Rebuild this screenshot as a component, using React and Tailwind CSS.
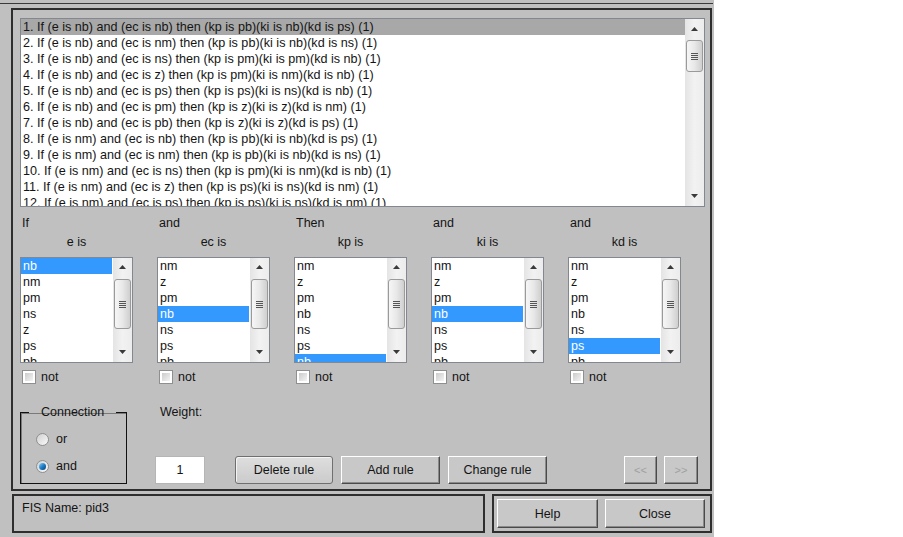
import React from "react";

const rules = [
  "1. If (e is nb) and (ec is nb) then (kp is pb)(ki is nb)(kd is ps) (1)",
  "2. If (e is nb) and (ec is nm) then (kp is pb)(ki is nb)(kd is ns) (1)",
  "3. If (e is nb) and (ec is ns) then (kp is pm)(ki is pm)(kd is nb) (1)",
  "4. If (e is nb) and (ec is z) then (kp is pm)(ki is nm)(kd is nb) (1)",
  "5. If (e is nb) and (ec is ps) then (kp is ps)(ki is ns)(kd is nb) (1)",
  "6. If (e is nb) and (ec is pm) then (kp is z)(ki is z)(kd is nm) (1)",
  "7. If (e is nb) and (ec is pb) then (kp is z)(ki is z)(kd is ps) (1)",
  "8. If (e is nm) and (ec is nb) then (kp is pb)(ki is nb)(kd is ps) (1)",
  "9. If (e is nm) and (ec is nm) then (kp is pb)(ki is nb)(kd is ns) (1)",
  "10. If (e is nm) and (ec is ns) then (kp is pm)(ki is nm)(kd is nb) (1)",
  "11. If (e is nm) and (ec is z) then (kp is ps)(ki is ns)(kd is nm) (1)",
  "12. If (e is nm) and (ec is ps) then (kp is ps)(ki is ns)(kd is nm) (1)",
];

const columns = [
  { head: "If", label: "e is", items: ["nb", "nm", "pm", "ns", "z", "ps", "pb"], sel: 0 },
  { head: "and", label: "ec is", items: ["nm", "z", "pm", "nb", "ns", "ps", "pb"], sel: 3 },
  { head: "Then", label: "kp is", items: ["nm", "z", "pm", "nb", "ns", "ps", "nb"], sel: 6 },
  { head: "and", label: "ki is", items: ["nm", "z", "pm", "nb", "ns", "ps", "pb"], sel: 3 },
  { head: "and", label: "kd is", items: ["nm", "z", "pm", "nb", "ns", "ps", "pb"], sel: 5 },
];

const Arrow = ({ down }) => (
  <svg width="7" height="4" viewBox="0 0 7 4">
    <polygon points={down ? "0,0 7,0 3.5,4" : "0,4 7,4 3.5,0"} fill="#3a3a3a" />
  </svg>
);

const ScrollBar = ({ up, thumb, down }) => (
  <div className="flex flex-col w-[19px] shrink-0 bg-gradient-to-r from-[#e4e4e4] via-[#f2f2f2] to-[#ececec]">
    <div className={"flex items-center justify-center " + up}>
      <Arrow />
    </div>
    <div
      className={
        "mx-[1px] rounded-[3px] border border-[#9a9a9a] bg-gradient-to-r from-[#f6f6f6] via-[#e8e8e8] to-[#cfcfcf] flex flex-col items-center justify-center gap-[1px] " +
        thumb
      }
    >
      <div className="w-[7px] h-px bg-[#555]" />
      <div className="w-[7px] h-px bg-[#555]" />
      <div className="w-[7px] h-px bg-[#555]" />
      <div className="w-[7px] h-px bg-[#555]" />
    </div>
    <div className={"mt-auto flex items-center justify-center " + down}>
      <Arrow down />
    </div>
  </div>
);

const CheckBox = () => (
  <div className="w-[14px] h-[14px] border border-[#8e8f8f] bg-white p-[2px]">
    <div className="w-full h-full bg-gradient-to-br from-[#cbcbcb] to-[#f4f4f4]" />
  </div>
);

const Radio = ({ on }) => (
  <div className="w-[13px] h-[13px] rounded-full border border-[#8e8f8f] bg-gradient-to-br from-[#d0d0d0] to-[#fafafa] flex items-center justify-center">
    {on && (
      <div className="w-[7px] h-[7px] rounded-full bg-gradient-to-br from-[#7fd0ff] via-[#1e7fc8] to-[#0b3e6e]" />
    )}
  </div>
);

const RaisedButton = ({ w, children, disabled }) => (
  <div
    className={
      "h-[28px] flex items-center justify-center border border-t-white border-l-white border-r-[#4a4a4a] border-b-[#4a4a4a] shadow-[inset_-1px_-1px_0_#8a8a8a] bg-[#c8c8c8] " +
      w +
      (disabled ? " text-[#a0a0a0] text-[11px]" : "")
    }
  >
    {children}
  </div>
);

export default function App() {
  return (
    <div
      className="w-[903px] h-[537px] bg-white text-[12.5px] leading-[14px] text-[#141414] overflow-hidden"
      style={{ fontFamily: '"Liberation Sans", Arial, sans-serif' }}
    >
      <div className="w-[714px] h-[537px] bg-[#c0c0c0] pt-[3px]">
        <div className="h-px bg-[#3a3a3a] w-[713px]" />

        {/* main panel */}
        <div className="ml-[11px] mt-[4px] w-[701px] h-[483px] border-2 border-[#2e2e2e] flex flex-col">
          {/* rule list */}
          <div className="ml-[7px] mt-[8px] w-[685px] h-[189px] border border-[#828790] bg-white flex overflow-hidden">
            <div className="flex-1 overflow-hidden text-[12.6px]">
              {rules.map((r, i) => (
                <div
                  key={i}
                  className={
                    "h-[16px] leading-[16px] pl-[2px] whitespace-nowrap " +
                    (i === 0 ? "bg-[#a8a8a8]" : "")
                  }
                >
                  {r}
                </div>
              ))}
            </div>
            <ScrollBar up="h-[20px]" thumb="mt-[1px] h-[32px]" down="h-[20px]" />
          </div>

          {/* variable columns */}
          <div className="ml-[7px] mt-[9px] flex">
            {columns.map((c, ci) => (
              <div key={ci} className="w-[137px] flex flex-col">
                <div className="pl-[2px]">{c.head}</div>
                <div className="mt-[5px] w-[113px] text-center">{c.label}</div>
                <div className="mt-[8px] w-[113px] h-[106px] border border-[#828790] bg-white flex overflow-hidden">
                  <div className="flex-1 overflow-hidden mr-[1px]">
                    {c.items.map((it, ii) => (
                      <div
                        key={ii}
                        className={
                          "h-[16px] leading-[16px] pl-[2px] " +
                          (ii === c.sel ? "bg-[#3399ff] text-white" : "")
                        }
                      >
                        {it}
                      </div>
                    ))}
                  </div>
                  <ScrollBar up="h-[18px]" thumb="mt-[3px] h-[50px]" down="h-[20px]" />
                </div>
                <div className="mt-[7px] ml-[2px] flex items-center gap-[5px] h-[14px]">
                  <CheckBox />
                  <span>not</span>
                </div>
              </div>
            ))}
          </div>

          {/* connection, weight and buttons */}
          <div className="ml-[7px] mt-[21px] flex">
            <fieldset className="w-[107px] min-w-0 h-[79px] border border-[#111] shadow-[inset_1px_1px_0_#7a7a7a] px-[8px]">
              <legend className="px-[12px]">Connection</legend>
              <div className="mt-[13px] ml-[7px] flex items-center gap-[7px]">
                <Radio />
                <span>or</span>
              </div>
              <div className="mt-[13px] ml-[7px] flex items-center gap-[7px]">
                <Radio on />
                <span>and</span>
              </div>
            </fieldset>

            <div className="ml-[28px] flex flex-col">
              <div className="pl-[5px]">Weight:</div>
              <div className="mt-auto flex items-end">
                <div className="w-[50px] h-[28px] bg-white border border-[#b5b5b5] flex items-center justify-center">
                  1
                </div>
                <div className="ml-[30px] w-[98px] h-[28px] rounded-[3px] border border-[#6f6f6f] bg-gradient-to-b from-[#dedede] to-[#cbcbcb] shadow-[inset_1px_1px_0_#f4f4f4] flex items-center justify-center">
                  Delete rule
                </div>
                <div className="ml-[8px]">
                  <RaisedButton w="w-[99px]">Add rule</RaisedButton>
                </div>
                <div className="ml-[8px]">
                  <RaisedButton w="w-[99px]">Change rule</RaisedButton>
                </div>
                <div className="ml-[77px]">
                  <RaisedButton w="w-[33px]" disabled>
                    &lt;&lt;
                  </RaisedButton>
                </div>
                <div className="ml-[7px]">
                  <RaisedButton w="w-[34px]" disabled>
                    &gt;&gt;
                  </RaisedButton>
                </div>
              </div>
            </div>
          </div>
        </div>

        {/* status row */}
        <div className="mt-[3px] flex">
          <div className="ml-[12px] w-[473px] h-[39px] border-2 border-[#2e2e2e] pl-[8px] pt-[5px]">
            FIS Name: pid3
          </div>
          <div className="ml-[7px] w-[220px] h-[39px] border-2 border-[#2e2e2e] flex pl-[3px] pt-[3px] gap-[7px]">
            <div className="w-[101px] h-[29px] flex items-center justify-center border border-t-white border-l-white border-r-[#4a4a4a] border-b-[#4a4a4a] shadow-[inset_-1px_-1px_0_#8a8a8a] bg-[#c8c8c8]">
              Help
            </div>
            <div className="w-[100px] h-[29px] flex items-center justify-center border border-t-white border-l-white border-r-[#4a4a4a] border-b-[#4a4a4a] shadow-[inset_-1px_-1px_0_#8a8a8a] bg-[#c8c8c8]">
              Close
            </div>
          </div>
        </div>
      </div>
    </div>
  );
}
